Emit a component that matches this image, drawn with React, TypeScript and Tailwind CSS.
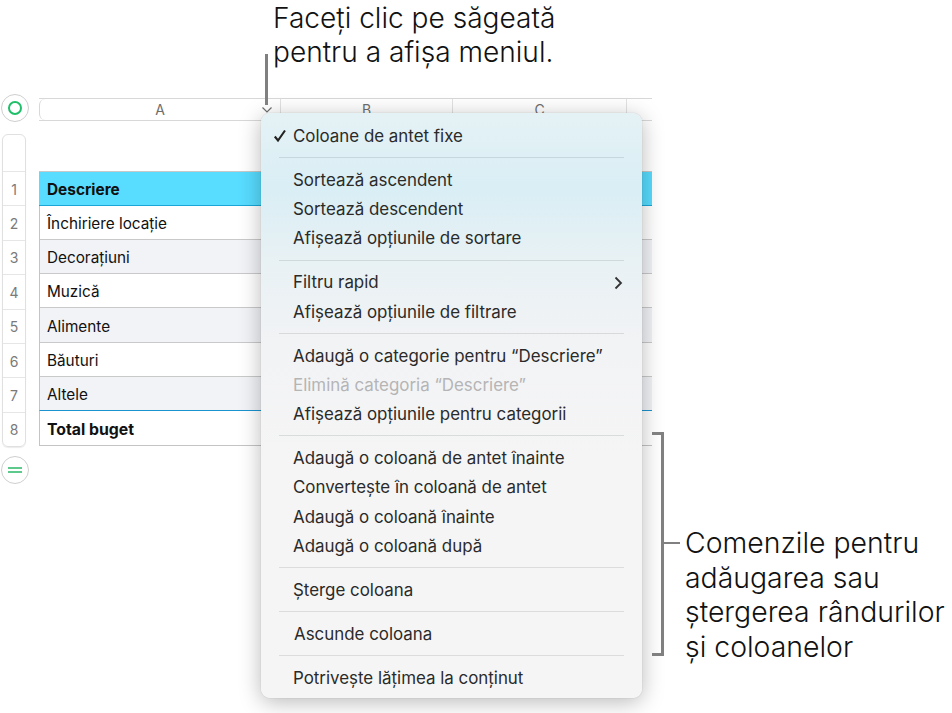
const rows: [string, string, boolean][] = [
  ["2", "Închiriere locație", false],
  ["3", "Decorațiuni", true],
  ["4", "Muzică", false],
  ["5", "Alimente", true],
  ["6", "Băuturi", false],
  ["7", "Altele", true],
];

type Item = { t: string; dis?: boolean; check?: boolean; sub?: boolean; shift?: boolean } | "sep";
const items: Item[] = [
  { t: "Coloane de antet fixe", check: true },
  "sep",
  { t: "Sortează ascendent" },
  { t: "Sortează descendent" },
  { t: "Afișează opțiunile de sortare" },
  "sep",
  { t: "Filtru rapid", sub: true },
  { t: "Afișează opțiunile de filtrare" },
  "sep",
  { t: "Adaugă o categorie pentru “Descriere”" },
  { t: "Elimină categoria “Descriere”", dis: true },
  { t: "Afișează opțiunile pentru categorii" },
  "sep",
  { t: "Adaugă o coloană de antet înainte" },
  { t: "Convertește în coloană de antet" },
  { t: "Adaugă o coloană înainte" },
  { t: "Adaugă o coloană după" },
  "sep",
  { t: "Șterge coloana" },
  "sep",
  { t: "Ascunde coloana", shift: true },
  "sep",
  { t: "Potrivește lățimea la conținut" },
];

export default function App() {
  return (
    <div className="relative w-[952px] h-[713px] overflow-hidden bg-white font-['Inter',sans-serif] text-[#1d1d1f]">
      {/* Spreadsheet */}
      <div className="flex flex-col pt-[94px] pl-[1px]">
        <div className="flex items-start">
          <div className="w-[28px] h-[28px] rounded-full border border-[#cfcfcf] flex items-center justify-center shrink-0">
            <div className="w-[14px] h-[14px] rounded-full border-2 border-[#1fbf6a]" />
          </div>
          <div className="ml-[10px] mt-[4px] h-[23px] w-[613px] flex text-[14px] text-[#6e6e6e] border-y border-[#d8d8d8]">
            <div className="w-[241px] border-l border-[#d8d8d8] rounded-l-[6px] flex items-center justify-center shrink-0">A</div>
            <div className="w-[172px] border-l border-[#e2e2e2] flex items-center justify-center shrink-0">B</div>
            <div className="w-[174px] border-l border-[#e2e2e2] flex items-center justify-center shrink-0">C</div>
            <div className="flex-1 border-l border-[#e2e2e2]" />
          </div>
        </div>
        <div className="flex mt-[12px]">
          <div className="w-[24px] ml-[1px] shrink-0 border border-[#e0e0e0] rounded-[6px] text-[14px] text-[#7a7a7a] shadow-[0_1px_1px_rgba(0,0,0,0.08)]">
            <div className="h-[36px]" />
            {["1", "2", "3", "4", "5", "6", "7", "8"].map((n) => (
              <div key={n} className="h-[34.4px] pt-[1px] border-t border-[#e6e6e6] flex items-center justify-center">{n}</div>
            ))}
          </div>
          <div className="ml-[13px] mt-[37px] w-[613px] text-[15.3px] text-[#111]">
            <div className="h-[34.5px] bg-[#58dcff] border-b border-[#1aa6d6] border-t border-t-[#c8c8c8] pl-[8px] pt-[2px] flex items-center font-bold text-[15.4px]">Descriere</div>
            {rows.map(([n, t, alt]) => (
              <div key={n} className={`h-[34.3px] pl-[7px] pt-[4px] flex items-center border-l border-b ${n === "7" ? "border-b-[#1a93cf]" : "border-b-[#c9c9c9]"} border-l-[#c4c4c4] ${alt ? "bg-[#f1f3f7]" : "bg-white"}`}>{t}</div>
            ))}
            <div className="h-[35px] pl-[7px] pt-[3px] flex items-center border-l border-b border-[#c4c4c4] font-bold text-[15.8px]">Total buget</div>
          </div>
        </div>
        <div className="mt-[9px] w-[28px] h-[28px] rounded-full border border-[#cfcfcf] flex flex-col gap-[2px] items-center justify-center">
          <div className="w-[14px] h-[2px] bg-[#5dc98c]" />
          <div className="w-[14px] h-[2px] bg-[#5dc98c]" />
        </div>
      </div>

      {/* Column arrow */}
      <svg className="absolute left-[261px] top-[106px]" width="12" height="8" viewBox="0 0 12 8">
        <path d="M1.5 1.5 L6 6 L10.5 1.5" fill="none" stroke="#6f6f6f" strokeWidth="1.2" />
      </svg>

      {/* Menu */}
      <div className="absolute left-[261px] top-[113px] w-[381px] h-[585px] rounded-[9px] pt-[9px] pb-[6px] bg-[linear-gradient(180deg,#e5f2f5_0%,#d9eef5_13%,#e8f1f4_25%,#f2f3f5_40%,#f5f5f5_60%)] shadow-[0_4px_22px_rgba(0,0,0,0.28),0_0_1px_rgba(0,0,0,0.3)] text-[16.9px] text-[#2a2a2a]">
        {items.map((it, i) =>
          it === "sep" ? (
            <div key={i} className="h-[14.6px] pb-[2px] flex items-center px-[18px]">
              <div className="h-px w-full bg-[rgba(0,0,0,0.1)]" />
            </div>
          ) : (
            <div key={i} className={`relative h-[29.3px] flex items-center ${it.shift ? "pl-[33px]" : "pl-[32px]"} pr-[19px] whitespace-nowrap ${it.dis ? "text-[#b5b5b5]" : ""}`}>
              {it.check && (
                <svg className="absolute left-[12px] top-[7px]" width="14" height="14" viewBox="0 0 14 14">
                  <path d="M1.8 7.5 L5 11.5 L12 1.5" fill="none" stroke="#222" strokeWidth="2.1" />
                </svg>
              )}
              <span className="flex-1">{it.t}</span>
              {it.sub && (
                <svg width="9" height="14" viewBox="0 0 9 14">
                  <path d="M1.5 1.5 L7 7 L1.5 12.5" fill="none" stroke="#333" strokeWidth="1.8" />
                </svg>
              )}
            </div>
          )
        )}
      </div>

      {/* Top annotation */}
      <div className="absolute left-[273px] top-[1px] text-[28.1px] leading-[34px] font-light text-[#111] whitespace-nowrap">
        <div>Faceți clic pe săgeată</div>
        <div>pentru a afișa meniul.</div>
      </div>
      <div className="absolute left-[265px] top-[54px] w-[3px] h-[51px] bg-[#808080]" />

      {/* Right annotation */}
      <div className="absolute left-[652px] top-[432px] w-[12px] h-[224px] border-y-[3px] border-r-[3px] border-[#808080]" />
      <div className="absolute left-[664px] top-[542px] w-[16px] h-[2px] bg-[#808080]" />
      <div className="absolute left-[685px] top-[526px] text-[28.4px] leading-[34.6px] font-light text-[#111] whitespace-nowrap">
        <div>Comenzile pentru</div>
        <div>adăugarea sau</div>
        <div>ștergerea rândurilor</div>
        <div>și coloanelor</div>
      </div>
    </div>
  );
}
